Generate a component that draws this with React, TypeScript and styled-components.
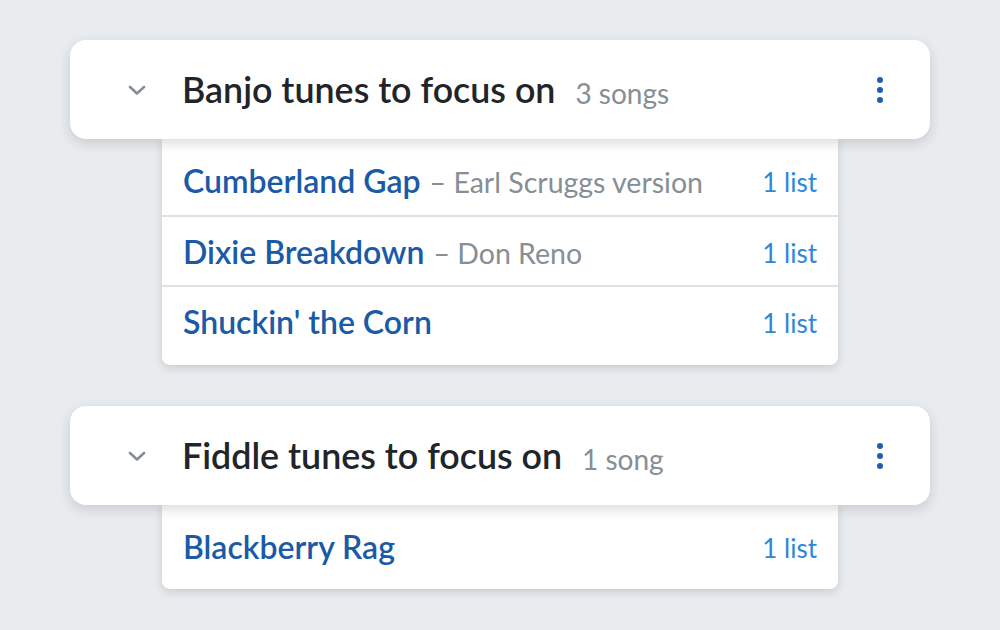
import React from 'react';
import styled, { createGlobalStyle } from 'styled-components';

// --------------  Elements

const GlobalStyle = createGlobalStyle`
  html, body {
    margin: 0;
    padding: 0;
    background: #e9ecef;
    font-family: Lato, "Open Sans", "Liberation Sans", sans-serif;
  }
`;

const Page = styled.div`
  width: 1000px;
  height: 630px;
  box-sizing: border-box;
  padding: 40px 70px 0 70px;
  display: flex;
  flex-direction: column;
  gap: 41px;
  overflow: hidden;
`;

const Group = styled.section`
  display: flex;
  flex-direction: column;
`;

const Header = styled.div`
  position: relative;
  z-index: 2;
  height: 99px;
  box-sizing: border-box;
  display: flex;
  align-items: center;
  padding: 0 40px 0 57px;
  background: #fff;
  border-radius: 16px;
  box-shadow: 0 4px 12px rgba(33, 37, 41, 0.17);
`;

const Chevron = styled.button`
  border: none;
  background: none;
  padding: 0;
  width: 20px;
  height: 12px;
  display: flex;
  align-items: center;
  justify-content: center;
  color: #868e96;
`;

const Title = styled.h2`
  margin: 0 0 0 35px;
  font-size: 35.8px;
  font-weight: 600;
  color: #212529;
  letter-spacing: 0;
`;

const Count = styled.span`
  margin-left: 20px;
  margin-top: 6px;
  font-size: 28px;
  color: #868e96;
`;

const Kebab = styled.button`
  margin-left: auto;
  border: none;
  background: none;
  padding: 0;
  width: 20px;
  display: flex;
  flex-direction: column;
  align-items: center;
  gap: 4px;
  span {
    width: 6px;
    height: 6px;
    border-radius: 50%;
    background: #1c5fb0;
  }
`;

const List = styled.ul<{ $last?: boolean }>`
  position: relative;
  z-index: 1;
  list-style: none;
  margin: 0 92px;
  padding: 6px 0 ${props => (props.$last ? 8 : 10)}px 0;
  background: #fff;
  border-radius: 0 0 8px 8px;
  box-shadow: 0 3px 8px rgba(33, 37, 41, 0.16);
`;

const Row = styled.li`
  height: 70px;
  box-sizing: border-box;
  padding: 0 21px;
  display: flex;
  align-items: center;
  & + & {
    border-top: 2px solid #dee2e6;
  }
`;

const SongName = styled.a`
  font-size: 32px;
  color: #1a5aa6;
  font-weight: 600;
  text-decoration: none;
`;

const Artist = styled.span`
  font-size: 28.5px;
  color: #868e96;
  margin-left: 9px;
  margin-top: 3px;
`;

const ListCount = styled.span`
  margin-left: auto;
  margin-top: 3px;
  font-size: 26px;
  color: #2e88d6;
`;

// --------------  Data

type TSong = { name: string; artist?: string }
type TGroup = { title: string; songs: TSong[] }

const groups: TGroup[] = [
    {
        title: 'Banjo tunes to focus on',
        songs: [
            { name: 'Cumberland Gap', artist: 'Earl Scruggs version' },
            { name: 'Dixie Breakdown', artist: 'Don Reno' },
            { name: "Shuckin' the Corn" },
        ],
    },
    {
        title: 'Fiddle tunes to focus on',
        songs: [{ name: 'Blackberry Rag' }],
    },
]

// --------------  Functions

function SongGroup({ title, songs, last }: TGroup & { last?: boolean }) {
    const label = songs.length === 1 ? '1 song' : `${songs.length} songs`
    return (
        <Group>
            <Header>
                <Chevron aria-label="collapse">
                    <svg width="18" height="10" viewBox="0 0 18 10">
                        <polyline points="2,2 9,8.5 16,2" fill="none" stroke="currentColor" strokeWidth="2.6" strokeLinecap="round" strokeLinejoin="round" />
                    </svg>
                </Chevron>
                <Title>{title}</Title>
                <Count>{label}</Count>
                <Kebab aria-label="more">
                    <span /><span /><span />
                </Kebab>
            </Header>
            <List $last={last}>
                {songs.map(song => (
                    <Row key={song.name}>
                        <SongName href="#">{song.name}</SongName>
                        {song.artist && <Artist>– {song.artist}</Artist>}
                        <ListCount>1 list</ListCount>
                    </Row>
                ))}
            </List>
        </Group>
    )
}

export default function App() {
    return (
        <>
            <GlobalStyle />
            <Page>
                {groups.map((g, i) => <SongGroup key={g.title} {...g} last={i === groups.length - 1} />)}
            </Page>
        </>
    )
}
